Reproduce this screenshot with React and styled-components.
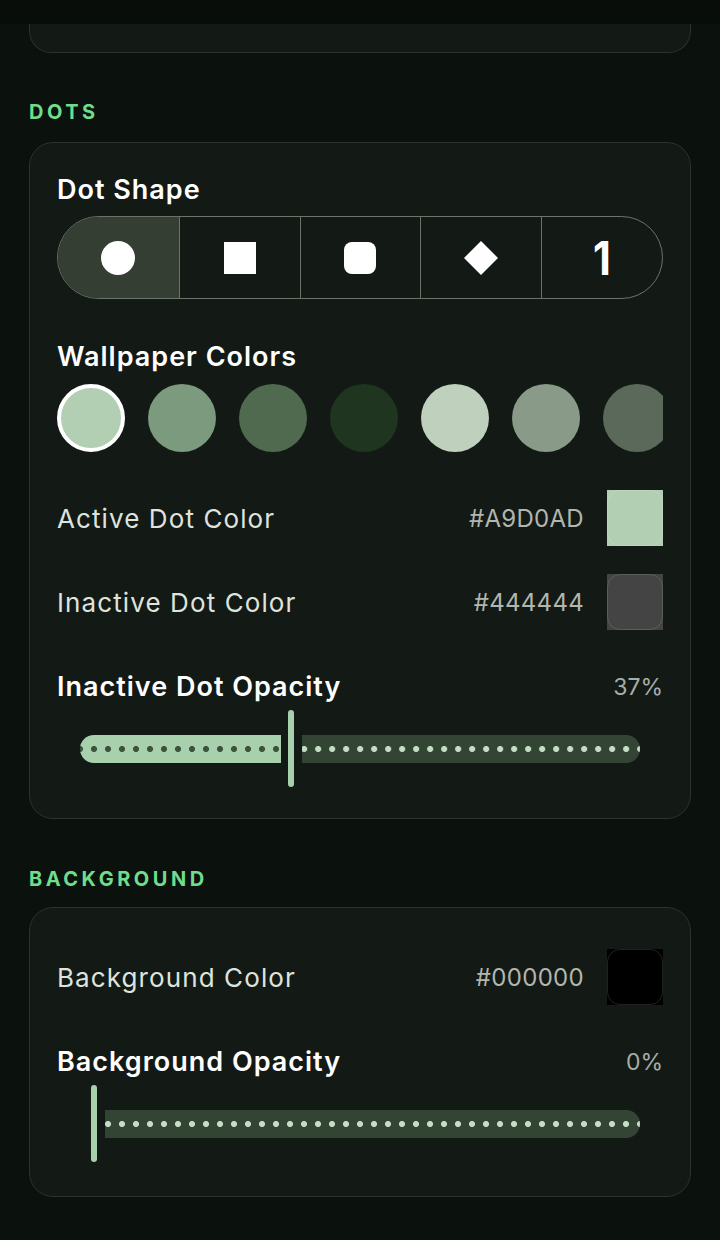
import React from "react";
import styled, { createGlobalStyle } from "styled-components";

const Global = createGlobalStyle`
  html, body { margin: 0; padding: 0; background: #0b110d; }
  body { font-family: Inter, "Noto Sans", sans-serif; -webkit-font-smoothing: antialiased; }
  * { box-sizing: border-box; }
`;

const Page = styled.div`
  width: 720px;
  min-height: 1240px;
  background: #0b110d;
  display: flex;
  flex-direction: column;
  padding: 0 29px 40px;
`;

const TopBar = styled.div`
  height: 24px;
  margin: 0 -29px;
  background: #090d0a;
`;

const CardTail = styled.div`
  height: 29px;
  background: #131915;
  border: 1.5px solid #2b332c;
  border-top: none;
  border-radius: 0 0 22px 22px;
`;

const SectionLabel = styled.div`
  margin-top: ${(p) => p.$mt}px;
  height: 24px;
  line-height: 24px;
  font-size: 20px;
  font-weight: 700;
  letter-spacing: 3.5px;
  color: #6fdd8b;
`;

const Card = styled.div`
  margin-top: ${(p) => p.$mt}px;
  background: #131915;
  border: 1.5px solid #2b332c;
  border-radius: 24px;
  padding: ${(p) => p.$pt}px 27px ${(p) => p.$pb}px;
  display: flex;
  flex-direction: column;
`;

const Title = styled.div`
  margin-top: ${(p) => p.$mt || 0}px;
  height: 32px;
  line-height: 32px;
  font-size: 27px;
  font-weight: 600;
  color: #ffffff;
  letter-spacing: 1px;
`;

const TitleRow = styled.div`
  margin-top: ${(p) => p.$mt || 0}px;
  display: flex;
  align-items: center;
  justify-content: space-between;
`;

const Percent = styled.span`
  font-size: 23px;
  color: #a7ada5;
`;

const Segmented = styled.div`
  margin-top: 10px;
  height: 83px;
  border: 1.5px solid #6c746a;
  border-radius: 42px;
  overflow: hidden;
  display: grid;
  grid-template-columns: repeat(5, 1fr);
`;

const Segment = styled.div`
  display: flex;
  align-items: center;
  justify-content: center;
  background: ${(p) => (p.$active ? "#343e33" : "transparent")};
  border-left: ${(p) => (p.$first ? "none" : "1.5px solid #6c746a")};
`;

const CircleShape = styled.div`
  width: 34px;
  height: 34px;
  border-radius: 50%;
  background: #fff;
`;

const SquareShape = styled.div`
  width: 32px;
  height: 32px;
  border-radius: ${(p) => p.$r || 0}px;
  background: #fff;
`;

const DiamondShape = styled.div`
  width: 24px;
  height: 24px;
  background: #fff;
  transform: rotate(45deg);
`;

const NumberShape = styled.span`
  font-size: 46px;
  font-weight: 700;
  color: #fff;
  line-height: 1;
  transform: scaleX(0.9);
`;

const Swatches = styled.div`
  margin-top: 11px;
  display: flex;
  gap: 23px;
  overflow: hidden;
`;

const Swatch = styled.div`
  flex: 0 0 68px;
  height: 68px;
  border-radius: 50%;
  background: ${(p) => p.$c};
  border: ${(p) => (p.$selected ? "4px solid #ffffff" : "none")};
`;

const ColorRow = styled.div`
  margin-top: ${(p) => p.$mt}px;
  height: 56px;
  display: flex;
  align-items: center;
`;

const RowLabel = styled.span`
  flex: 1;
  font-size: 26px;
  color: #dfe3dd;
  letter-spacing: 1.1px;
`;

const Hex = styled.span`
  font-size: 24px;
  color: #b1b6af;
  margin-right: 23px;
  letter-spacing: 0.3px;
`;

const ColorBox = styled.div`
  width: 56px;
  height: 56px;
  background: ${(p) => p.$c};
  display: flex;
  &::after {
    content: "";
    flex: 1;
    border-radius: 13px;
    border: 1.5px solid rgba(255, 255, 255, 0.13);
  }
`;

const SliderWrap = styled.div`
  margin-top: 7px;
  height: 77px;
  padding: 0 23px;
  display: flex;
  align-items: center;
`;

const Track = styled.div`
  position: relative;
  width: 560px;
  height: 77px;
  display: flex;
  align-items: center;
`;

const dots = (c) =>
  `radial-gradient(circle at 7px 50%, ${c} 2.7px, transparent 3.3px)`;

const Filled = styled.div`
  height: 28px;
  flex: none;
  background-color: #a9d0ad;
  background-image: ${dots("#3b523d")};
  background-size: 14px 100%;
  background-repeat: repeat-x;
  border-radius: 14px 0 0 14px;
`;

const Rest = styled.div`
  height: 28px;
  flex: 1;
  background-color: #344434;
  background-image: ${dots("#c4dec4")};
  background-size: 14px 100%;
  background-repeat: repeat-x;
  border-radius: 0 14px 14px 0;
`;

const Thumb = styled.div`
  position: absolute;
  top: 0;
  width: 6px;
  height: 77px;
  border-radius: 3px;
  background: #a9d0ad;
`;

function Slider({ pct }) {
  const c = 14 + pct * 532;
  const fillW = pct > 0 ? c - 10 : 0;
  const restStart = c + 11;
  const off = (((7 - restStart) % 14) + 14) % 14;
  return (
    <SliderWrap>
      <Track>
        {fillW > 0 && <Filled style={{ width: fillW, backgroundPositionX: 7 }} />}
        <Rest style={{ marginLeft: restStart - fillW, backgroundPositionX: off }} />
        <Thumb style={{ left: c - 3 }} />
      </Track>
    </SliderWrap>
  );
}

const wallpaper = ["#b3cfb3", "#7c9a7e", "#506a50", "#1f3520", "#bfd0bd", "#8a9a88", "#5b695b"];

export default function App() {
  return (
    <>
      <Global />
      <Page>
        <TopBar />
        <CardTail />

        <SectionLabel $mt={47}>DOTS</SectionLabel>
        <Card $mt={18} $pt={31} $pb={31}>
          <Title>Dot Shape</Title>
          <Segmented>
            <Segment $first $active>
              <CircleShape />
            </Segment>
            <Segment>
              <SquareShape />
            </Segment>
            <Segment>
              <SquareShape $r={8} />
            </Segment>
            <Segment>
              <DiamondShape />
            </Segment>
            <Segment>
              <NumberShape>1</NumberShape>
            </Segment>
          </Segmented>

          <Title $mt={42}>Wallpaper Colors</Title>
          <Swatches>
            {wallpaper.map((c, i) => (
              <Swatch key={c} $c={c} $selected={i === 0} />
            ))}
          </Swatches>

          <ColorRow $mt={38}>
            <RowLabel>Active Dot Color</RowLabel>
            <Hex>#A9D0AD</Hex>
            <ColorBox $c="#b3cfb3" />
          </ColorRow>
          <ColorRow $mt={28}>
            <RowLabel>Inactive Dot Color</RowLabel>
            <Hex>#444444</Hex>
            <ColorBox $c="#444444" />
          </ColorRow>

          <TitleRow $mt={41}>
            <Title>Inactive Dot Opacity</Title>
            <Percent>37%</Percent>
          </TitleRow>
          <Slider pct={0.37} />
        </Card>

        <SectionLabel $mt={48}>BACKGROUND</SectionLabel>
        <Card $mt={16} $pt={41} $pb={34}>
          <ColorRow $mt={0}>
            <RowLabel>Background Color</RowLabel>
            <Hex>#000000</Hex>
            <ColorBox $c="#000000" />
          </ColorRow>
          <TitleRow $mt={41}>
            <Title>Background Opacity</Title>
            <Percent>0%</Percent>
          </TitleRow>
          <Slider pct={0} />
        </Card>
      </Page>
    </>
  );
}
